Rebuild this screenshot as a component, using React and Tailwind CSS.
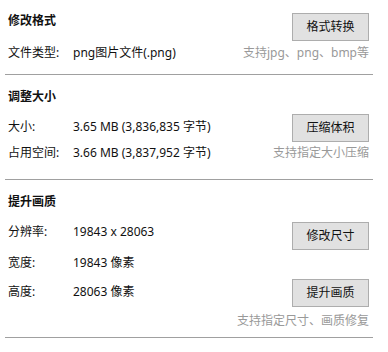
const font = { fontFamily: '"Noto Sans", "Noto Sans CJK SC", sans-serif' };

const Btn = ({ children, className = "" }) => (
  <button
    className={`h-[28px] w-[77px] border border-[#adadad] bg-[#e1e1e1] text-[12px] leading-4 text-[#111] ${className}`}
  >
    {children}
  </button>
);

const Row = ({ label, value, className = "" }) => (
  <div className={`flex h-4 items-center leading-4 ${className}`}>
    <span className="w-[65px] shrink-0">{label}</span>
    <span>{value}</span>
  </div>
);

const Divider = ({ className = "" }) => (
  <div className={`ml-[5px] mr-[15px] h-px bg-[#a0a0a0] ${className}`} />
);

export default function App() {
  return (
    <div
      className="h-[352px] w-[388px] overflow-hidden bg-white text-[12px] text-[#111]"
      style={font}
    >
      {/* 修改格式 */}
      <div className="flex pl-[8px] pr-[19px] pt-[13px]">
        <div className="flex-1">
          <div className="h-4 font-bold leading-4">修改格式</div>
          <Row className="mt-4" label="文件类型:" value="png图片文件(.png)" />
        </div>
        <div className="flex flex-col items-end">
          <Btn>格式转换</Btn>
          <div className="mt-1 h-4 leading-4 text-[#999]">支持jpg、png、bmp等</div>
        </div>
      </div>
      <Divider className="mt-[13px]" />

      {/* 调整大小 */}
      <div className="flex pl-[8px] pr-[19px] pt-[14px]">
        <div className="flex-1">
          <div className="h-4 font-bold leading-4">调整大小</div>
          <Row className="mt-[14px]" label="大小:" value="3.65 MB (3,836,835 字节)" />
          <Row className="mt-[10px]" label="占用空间:" value="3.66 MB (3,837,952 字节)" />
        </div>
        <div className="mt-[25px] flex flex-col items-end">
          <Btn>压缩体积</Btn>
          <div className="mt-[3px] h-4 leading-4 text-[#999]">支持指定大小压缩</div>
        </div>
      </div>
      <Divider className="mt-[18px]" />

      {/* 提升画质 */}
      <div className="flex pl-[8px] pr-[19px] pt-[14px]">
        <div className="flex-1">
          <div className="h-4 font-bold leading-4">提升画质</div>
          <Row className="mt-[14px]" label="分辨率:" value="19843 x 28063" />
          <Row className="mt-[15px]" label="宽度:" value="19843 像素" />
          <Row className="mt-[13px]" label="高度:" value="28063 像素" />
        </div>
        <div className="mt-[28px] flex flex-col items-end">
          <Btn>修改尺寸</Btn>
          <Btn className="mt-[29px]">提升画质</Btn>
          <div className="mt-[6px] h-4 leading-4 text-[#999]">支持指定尺寸、画质修复</div>
        </div>
      </div>
      <Divider className="mt-[8px]" />
    </div>
  );
}
